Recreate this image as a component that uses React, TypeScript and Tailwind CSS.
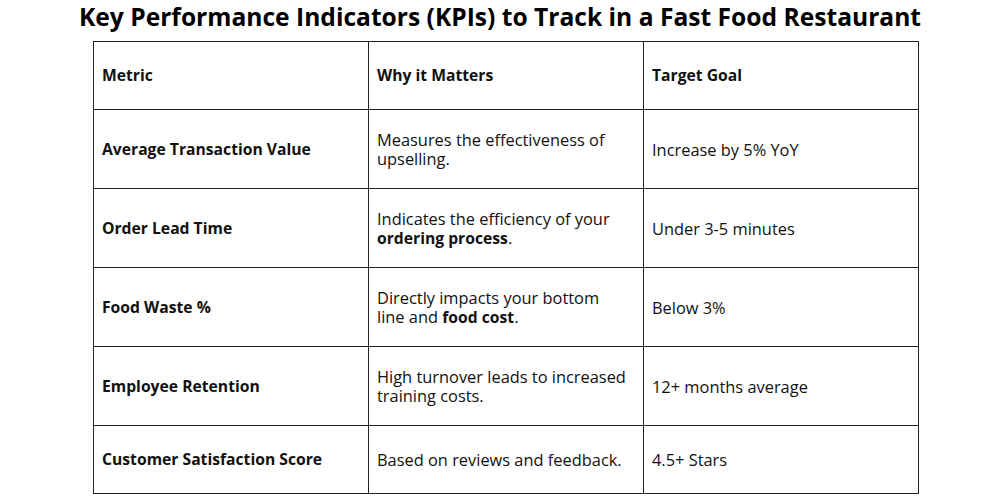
const rows: { metric: string; why: React.ReactNode; goal: string }[] = [
  {
    metric: "Average Transaction Value",
    why: (
      <>
        Measures the effectiveness of
        <br />
        upselling.
      </>
    ),
    goal: "Increase by 5% YoY",
  },
  {
    metric: "Order Lead Time",
    why: (
      <>
        Indicates the efficiency of your
        <br />
        <b>ordering process</b>.
      </>
    ),
    goal: "Under 3-5 minutes",
  },
  {
    metric: "Food Waste %",
    why: (
      <>
        Directly impacts your bottom
        <br />
        line and <b>food cost</b>.
      </>
    ),
    goal: "Below 3%",
  },
  {
    metric: "Employee Retention",
    why: (
      <>
        High turnover leads to increased
        <br />
        training costs.
      </>
    ),
    goal: "12+ months average",
  },
  {
    metric: "Customer Satisfaction Score",
    why: <>Based on reviews and feedback.</>,
    goal: "4.5+ Stars",
  },
];

export default function App() {
  return (
    <div className="h-[500px] w-[1000px] bg-white font-['Open_Sans',sans-serif] text-[#111]">
      <h1 className="pt-[2px] text-center text-[24.6px] font-bold leading-[30px] text-black">
        Key Performance Indicators (KPIs) to Track in a Fast Food Restaurant
      </h1>
      <table className="ml-[93px] mt-[9px] w-[826px] table-fixed border-collapse text-[16.4px] leading-[19px]">
        <tbody>
          <tr className="h-[68px] text-[15.7px]">
            <th className="border border-[#222] px-2 text-left font-bold">Metric</th>
            <th className="border border-[#222] px-2 text-left font-bold">Why it Matters</th>
            <th className="border border-[#222] px-2 text-left font-bold">Target Goal</th>
          </tr>
          {rows.map((r, i) => (
            <tr key={r.metric} className={i === rows.length - 1 ? "h-[68px]" : "h-[79px]"}>
              <td className="border border-[#222] px-2 text-[15.7px] font-bold">{r.metric}</td>
              <td className="whitespace-nowrap border border-[#222] px-2 [&_b]:text-[15.7px]">{r.why}</td>
              <td className="border border-[#222] px-2">{r.goal}</td>
            </tr>
          ))}
        </tbody>
      </table>
    </div>
  );
}
